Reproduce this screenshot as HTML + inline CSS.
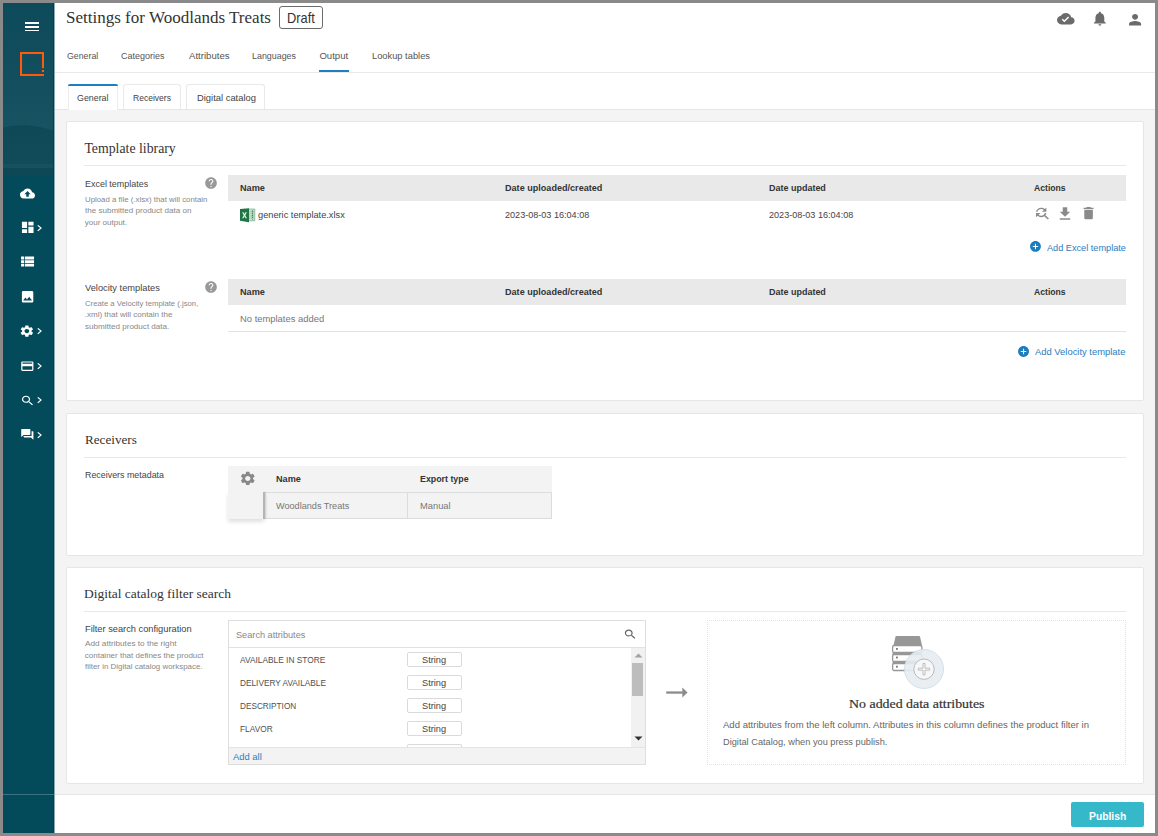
<!DOCTYPE html><html><head><meta charset="utf-8"><title>Settings</title><style>*{margin:0;padding:0}
html,body{width:1158px;height:836px;overflow:hidden;background:#8a8a8a}
body{position:relative;font-family:"Liberation Sans", sans-serif;color:#444}
.t{position:absolute;white-space:nowrap;line-height:1;transform-origin:0 0}
.b{position:absolute}
</style></head><body>
<div class="b" style="left:3px;top:3px;width:1152px;height:830px;background:#fff"></div>
<div class="b" style="left:54px;top:110px;width:1101px;height:684px;background:#f4f4f4"></div>
<div class="b" style="left:54px;top:109px;width:1101px;height:1px;background:#e6e6e6"></div>
<div class="b" style="left:54px;top:72px;width:1101px;height:1px;background:#e8e8e8"></div>
<div class="b" style="left:54px;top:794px;width:1101px;height:1px;background:#e6e6e6"></div>
<div class="b" style="left:3px;top:3px;width:51px;height:830px;background:#034b5b"></div>
<svg class="b" style="left:3px;top:3px" width="51" height="172" viewBox="0 0 51 172">
<defs><linearGradient id="sky" x1="0" y1="0" x2="0" y2="1"><stop offset="0" stop-color="#0e4b5a"/><stop offset="0.5" stop-color="#134f5e"/><stop offset="1" stop-color="#1b5765"/></linearGradient>
<linearGradient id="mt" x1="0" y1="0" x2="0" y2="1"><stop offset="0" stop-color="#0f4856"/><stop offset="1" stop-color="#124b59"/></linearGradient></defs>
<rect width="51" height="172" fill="url(#sky)"/>
<path d="M0 124.5 C8 123 16 121.8 22 122 C32 122.5 42 125 51 127.5 L51 172 L0 172 Z" fill="url(#mt)"/>
<rect y="161" width="51" height="4" fill="#15515f"/>
<rect y="165" width="51" height="7" fill="#0e4755"/>
</svg>
<div class="b" style="left:53px;top:3px;width:1px;height:830px;background:#003f4f"></div>
<div class="b" style="left:54px;top:3px;width:1px;height:830px;background:#8aa9b1"></div>
<div class="b" style="left:3px;top:794px;width:51px;height:1px;background:#3d7380"></div>
<div class="t" style="left:66.40px;top:8.89px;font-size:17px;font-family:'Liberation Serif', serif;color:#333;transform:scaleX(1.0015);">Settings for Woodlands Treats</div>
<div class="b" style="left:279px;top:6px;width:44px;height:23px;border:1px solid #6b6b6b;border-radius:3px;background:#fff;box-sizing:border-box"></div>
<div class="t" style="left:287.30px;top:10.89px;font-size:14.6px;color:#333;transform:scaleX(0.8787);">Draft</div>
<div class="t" style="left:66.90px;top:50.94px;font-size:9.6px;color:#555;transform:scaleX(0.9165);">General</div>
<div class="t" style="left:121.40px;top:50.94px;font-size:9.6px;color:#555;transform:scaleX(0.9370);">Categories</div>
<div class="t" style="left:189.00px;top:50.94px;font-size:9.6px;color:#555;">Attributes</div>
<div class="t" style="left:252.00px;top:50.94px;font-size:9.6px;color:#555;transform:scaleX(0.9261);">Languages</div>
<div class="t" style="left:319.40px;top:50.94px;font-size:9.6px;color:#555;">Output</div>
<div class="t" style="left:372.00px;top:50.94px;font-size:9.6px;color:#555;transform:scaleX(0.9702);">Lookup tables</div>
<div class="b" style="left:319px;top:70px;width:30px;height:2px;background:#1b7fc4"></div>
<div class="b" style="left:68px;top:84px;width:50px;height:26px;background:#fff;border:1px solid #ececec;border-bottom:none;border-radius:2px 2px 0 0;box-sizing:border-box"></div>
<div class="b" style="left:68px;top:84px;width:50px;height:2px;background:#1b7fc4;border-radius:2px 2px 0 0"></div>
<div class="b" style="left:123px;top:84px;width:58px;height:25px;background:#fff;border:1px solid #e9e9e9;border-bottom:none;border-radius:3px 3px 0 0;box-sizing:border-box"></div>
<div class="b" style="left:186px;top:84px;width:79px;height:25px;background:#fff;border:1px solid #e9e9e9;border-bottom:none;border-radius:3px 3px 0 0;box-sizing:border-box"></div>
<div class="t" style="left:77.20px;top:92.87px;font-size:9.8px;transform:scaleX(0.9035);">General</div>
<div class="t" style="left:133.20px;top:92.87px;font-size:9.8px;transform:scaleX(0.8722);">Receivers</div>
<div class="t" style="left:196.50px;top:92.87px;font-size:9.8px;transform:scaleX(0.9585);">Digital catalog</div>
<div class="b" style="left:66px;top:121px;width:1078px;height:280px;background:#fff;border:1px solid #e6e6e6;border-radius:2px;box-sizing:border-box"></div>
<div class="b" style="left:66px;top:413px;width:1078px;height:143px;background:#fff;border:1px solid #e6e6e6;border-radius:2px;box-sizing:border-box"></div>
<div class="b" style="left:66px;top:567px;width:1078px;height:217px;background:#fff;border:1px solid #e6e6e6;border-radius:2px;box-sizing:border-box"></div>
<div class="t" style="left:84.40px;top:141.55px;font-size:13.8px;font-family:'Liberation Serif', serif;color:#333;">Template library</div>
<div class="b" style="left:84px;top:165px;width:1042px;height:1px;background:#e8e8e8"></div>
<div class="t" style="left:84.80px;top:178.97px;font-size:9.8px;transform:scaleX(0.9136);">Excel templates</div>
<div class="t" style="left:84.80px;top:195.60px;font-size:8.0px;color:#888;transform:scaleX(0.9797);">Upload a file (.xlsx) that will contain</div>
<div class="t" style="left:84.80px;top:207.10px;font-size:8.0px;color:#888;transform:scaleX(1.0052);">the submitted product data on</div>
<div class="t" style="left:84.80px;top:218.60px;font-size:8.0px;color:#888;">your output.</div>
<div class="b" style="left:228px;top:175px;width:898px;height:26px;background:#e9e9e9"></div>
<div class="t" style="left:240.00px;top:182.89px;font-size:9.9px;font-weight:700;color:#333;transform:scaleX(0.9272);">Name</div>
<div class="t" style="left:504.70px;top:182.89px;font-size:9.9px;font-weight:700;color:#333;transform:scaleX(0.9192);">Date uploaded/created</div>
<div class="t" style="left:769.40px;top:182.89px;font-size:9.9px;font-weight:700;color:#333;transform:scaleX(0.9090);">Date updated</div>
<div class="t" style="left:1033.60px;top:182.89px;font-size:9.9px;font-weight:700;color:#333;transform:scaleX(0.8732);">Actions</div>
<div class="t" style="left:257.60px;top:210.24px;font-size:9.6px;transform:scaleX(0.9626);">generic template.xlsx</div>
<div class="t" style="left:504.70px;top:210.24px;font-size:9.6px;transform:scaleX(0.9457);">2023-08-03 16:04:08</div>
<div class="t" style="left:769.40px;top:210.24px;font-size:9.6px;transform:scaleX(0.9457);">2023-08-03 16:04:08</div>
<div class="t" style="left:1046.90px;top:242.84px;font-size:9.6px;color:#2a7dc0;transform:scaleX(0.9551);">Add Excel template</div>
<div class="t" style="left:84.80px;top:283.37px;font-size:9.8px;transform:scaleX(0.9470);">Velocity templates</div>
<div class="t" style="left:84.80px;top:299.70px;font-size:8.0px;color:#888;transform:scaleX(0.9651);">Create a Velocity template (.json,</div>
<div class="t" style="left:84.80px;top:311.20px;font-size:8.0px;color:#888;">.xml) that will contain the</div>
<div class="t" style="left:84.80px;top:322.70px;font-size:8.0px;color:#888;transform:scaleX(1.0083);">submitted product data.</div>
<div class="b" style="left:228px;top:279px;width:898px;height:26px;background:#e9e9e9"></div>
<div class="t" style="left:240.00px;top:287.08px;font-size:9.9px;font-weight:700;color:#333;transform:scaleX(0.9272);">Name</div>
<div class="t" style="left:504.70px;top:287.08px;font-size:9.9px;font-weight:700;color:#333;transform:scaleX(0.9192);">Date uploaded/created</div>
<div class="t" style="left:769.40px;top:287.08px;font-size:9.9px;font-weight:700;color:#333;transform:scaleX(0.9090);">Date updated</div>
<div class="t" style="left:1033.60px;top:287.08px;font-size:9.9px;font-weight:700;color:#333;transform:scaleX(0.8732);">Actions</div>
<div class="t" style="left:240.00px;top:313.84px;font-size:9.6px;color:#777;transform:scaleX(0.9800);">No templates added</div>
<div class="b" style="left:228px;top:331px;width:898px;height:1px;background:#e2e2e2"></div>
<div class="t" style="left:1034.90px;top:347.34px;font-size:9.6px;color:#2a7dc0;transform:scaleX(0.9803);">Add Velocity template</div>
<div class="t" style="left:84.80px;top:432.81px;font-size:13px;font-family:'Liberation Serif', serif;color:#333;transform:scaleX(1.0107);">Receivers</div>
<div class="b" style="left:84px;top:457px;width:1042px;height:1px;background:#e8e8e8"></div>
<div class="t" style="left:84.80px;top:469.87px;font-size:9.8px;transform:scaleX(0.9065);">Receivers metadata</div>
<div class="b" style="left:228px;top:466px;width:324px;height:53px;background:#f3f3f3"></div>
<div class="b" style="left:228px;top:492px;width:324px;height:27px;border:1px solid #dcdcdc;border-left:none;box-sizing:border-box"></div>
<div class="b" style="left:407px;top:492px;width:1px;height:27px;background:#dcdcdc"></div>
<div class="b" style="left:228px;top:492px;width:36px;height:27px;background:#f3f3f3;box-shadow:0 3px 4px rgba(0,0,0,0.12)"></div>
<div class="b" style="left:263px;top:492px;width:2px;height:27px;background:#b5b5b5;box-shadow:1px 0 2px rgba(0,0,0,0.15)"></div>
<div class="t" style="left:276.00px;top:474.48px;font-size:9.9px;font-weight:700;color:#333;transform:scaleX(0.9235);">Name</div>
<div class="t" style="left:419.80px;top:474.48px;font-size:9.9px;font-weight:700;color:#333;transform:scaleX(0.8942);">Export type</div>
<div class="t" style="left:276.00px;top:500.84px;font-size:9.6px;color:#777;transform:scaleX(0.9508);">Woodlands Treats</div>
<div class="t" style="left:419.80px;top:500.84px;font-size:9.6px;color:#777;transform:scaleX(0.9719);">Manual</div>
<div class="t" style="left:84.40px;top:587.09px;font-size:13.5px;font-family:'Liberation Serif', serif;color:#333;transform:scaleX(0.9979);">Digital catalog filter search</div>
<div class="b" style="left:84px;top:611px;width:1042px;height:1px;background:#e8e8e8"></div>
<div class="t" style="left:84.80px;top:623.97px;font-size:9.8px;transform:scaleX(0.9454);">Filter search configuration</div>
<div class="t" style="left:84.80px;top:640.20px;font-size:8.0px;color:#888;transform:scaleX(1.0236);">Add attributes to the right</div>
<div class="t" style="left:84.80px;top:651.50px;font-size:8.0px;color:#888;">container that defines the product</div>
<div class="t" style="left:84.80px;top:663.30px;font-size:8.0px;color:#888;transform:scaleX(0.9897);">filter in Digital catalog workspace.</div>
<div class="b" style="left:228px;top:620px;width:418px;height:145px;border:1px solid #dedede;box-sizing:border-box;background:#fff"></div>
<div class="b" style="left:229px;top:647px;width:416px;height:1px;background:#e2e2e2"></div>
<div class="t" style="left:236.30px;top:629.84px;font-size:9.6px;color:#888;transform:scaleX(0.9563);">Search attributes</div>
<div class="t" style="left:240.40px;top:655.04px;font-size:9.6px;color:#505050;transform:scaleX(0.8699);">AVAILABLE IN STORE</div>
<div class="b" style="left:407px;top:652px;width:55px;height:15px;border:1px solid #dadada;border-radius:2px;box-sizing:border-box;background:#fff"></div>
<div class="t" style="left:422.10px;top:655.34px;font-size:9.6px;transform:scaleX(0.9610);">String</div>
<div class="t" style="left:240.40px;top:677.94px;font-size:9.6px;color:#505050;transform:scaleX(0.8633);">DELIVERY AVAILABLE</div>
<div class="b" style="left:407px;top:675px;width:55px;height:15px;border:1px solid #dadada;border-radius:2px;box-sizing:border-box;background:#fff"></div>
<div class="t" style="left:422.10px;top:678.24px;font-size:9.6px;transform:scaleX(0.9610);">String</div>
<div class="t" style="left:240.40px;top:700.84px;font-size:9.6px;color:#505050;transform:scaleX(0.8581);">DESCRIPTION</div>
<div class="b" style="left:407px;top:698px;width:55px;height:15px;border:1px solid #dadada;border-radius:2px;box-sizing:border-box;background:#fff"></div>
<div class="t" style="left:422.10px;top:701.14px;font-size:9.6px;transform:scaleX(0.9610);">String</div>
<div class="t" style="left:240.40px;top:723.74px;font-size:9.6px;color:#505050;transform:scaleX(0.8674);">FLAVOR</div>
<div class="b" style="left:407px;top:721px;width:55px;height:15px;border:1px solid #dadada;border-radius:2px;box-sizing:border-box;background:#fff"></div>
<div class="t" style="left:422.10px;top:724.04px;font-size:9.6px;transform:scaleX(0.9610);">String</div>
<div class="b" style="left:407px;top:744px;width:55px;height:4px;border:1px solid #dadada;border-bottom:none;border-radius:2px 2px 0 0;box-sizing:border-box"></div>
<div class="b" style="left:631px;top:648px;width:14px;height:99px;background:#f1f1f1"></div>
<div class="b" style="left:632px;top:663px;width:11px;height:33px;background:#bdbdbd"></div>
<div class="b" style="left:229px;top:747px;width:416px;height:17px;background:#f3f3f3;border-top:1px solid #e4e4e4;box-sizing:border-box"></div>
<div class="t" style="left:232.70px;top:751.84px;font-size:9.6px;color:#2a7dc0;transform:scaleX(0.9811);">Add all</div>
<svg class="b" style="left:660px;top:682px" width="34" height="20" viewBox="0 0 34 20"><rect x="6.2" y="9.4" width="16.6" height="2.3" fill="#8c8c8c"/><path d="M22.3 5.6L27.6 10.6L22.3 15.6Z" fill="#8c8c8c"/></svg>
<div class="b" style="left:707px;top:620px;width:419px;height:145px;border:1px dotted #e2e2e2;box-sizing:border-box"></div>
<div class="t" style="left:848.90px;top:698.46px;font-size:12.7px;font-family:'Liberation Serif', serif;color:#333;transform:scaleX(1.0955);-webkit-text-stroke:0.2px #333;">No added data attributes</div>
<div class="t" style="left:722.50px;top:720.31px;font-size:9.4px;color:#666;transform:scaleX(1.0180);">Add attributes from the left column. Attributes in this column defines the product filter in</div>
<div class="t" style="left:722.50px;top:737.41px;font-size:9.4px;color:#666;transform:scaleX(0.9856);">Digital Catalog, when you press publish.</div>
<div class="b" style="left:24.8px;top:22px;width:14.2px;height:1.9px;background:#fff"></div><div class="b" style="left:24.8px;top:25.8px;width:14.2px;height:1.9px;background:#fff"></div><div class="b" style="left:24.8px;top:29.5px;width:14.2px;height:1.9px;background:#fff"></div>
<svg class="b" style="left:20px;top:52px" width="24" height="24" viewBox="0 0 24 24"><path d="M23 16.3V1H1V23H24" fill="none" stroke="#ff5a0a" stroke-width="2.1"/><rect x="21.9" y="18" width="2.1" height="2.1" fill="#ff5a0a"/></svg>
<svg class="b" style="left:20.00px;top:185.50px" width="15.00" height="15.00" viewBox="0 0 24 24" preserveAspectRatio="none"><path fill="#fff" d="M19.35 10.04C18.67 6.59 15.64 4 12 4 9.11 4 6.6 5.64 5.35 8.04 2.34 8.36 0 10.91 0 14c0 3.31 2.69 6 6 6h13c2.76 0 5-2.24 5-5 0-2.64-2.05-4.78-4.65-4.96zM14 13v4h-4v-4H7l5-5 5 5h-3z"/></svg>
<svg class="b" style="left:19.77px;top:219.85px" width="15.47" height="14.80" viewBox="0 0 24 24" preserveAspectRatio="none"><path fill="#fff" d="M3 13h8V3H3v10zm0 8h8v-6H3v6zm10 0h8V11h-8v10zm0-18v6h8V3h-8z"/></svg>
<svg class="b" style="left:32.47px;top:221.85px" width="14.90" height="12.20" viewBox="0 0 24 24" preserveAspectRatio="none"><path fill="#fff" d="M10 6L8.59 7.41 13.17 12l-4.58 4.59L10 18l6-6z"/></svg>
<svg class="b" style="left:17.94px;top:253.43px" width="18.35" height="17.14" viewBox="0 0 24 24" preserveAspectRatio="none"><path fill="#fff" d="M4 14h4v-4H4v4zm0 5h4v-4H4v4zM4 9h4V5H4v4zm5 5h12v-4H9v4zm0 5h12v-4H9v4zM9 5v4h12V5H9z"/></svg>
<svg class="b" style="left:20.00px;top:288.78px" width="15.20" height="15.33" viewBox="0 0 24 24" preserveAspectRatio="none"><path fill="#fff" d="M21 19V5c0-1.1-.9-2-2-2H5c-1.1 0-2 .9-2 2v14c0 1.1.9 2 2 2h14c1.1 0 2-.9 2-2zM8.5 13.5l2.5 3.01L14.5 12l4.5 6H5l3.5-4.5z"/></svg>
<svg class="b" style="left:19.33px;top:324.02px" width="15.74" height="14.16" viewBox="0 0 24 24" preserveAspectRatio="none"><path fill="#fff" d="M19.14 12.94c.04-.3.06-.61.06-.94 0-.32-.02-.64-.07-.94l2.03-1.58c.18-.14.23-.41.12-.61l-1.92-3.32c-.12-.22-.37-.29-.59-.22l-2.39.96c-.5-.38-1.03-.7-1.62-.94l-.36-2.54c-.04-.24-.24-.41-.48-.41h-3.84c-.24 0-.43.17-.47.41l-.36 2.54c-.59.24-1.13.57-1.62.94l-2.39-.96c-.22-.08-.47 0-.59.22L2.74 8.87c-.12.21-.08.47.12.61l2.03 1.58c-.05.3-.09.63-.09.94s.02.64.07.94l-2.03 1.58c-.18.14-.23.41-.12.61l1.920 3.32c.12.22.37.29.59.22l2.39-.96c.5.38 1.03.7 1.62.94l.36 2.54c.05.24.24.41.48.41h3.84c.24 0 .44-.17.47-.41l.36-2.54c.59-.24 1.13-.56 1.62-.94l2.39.96c.22.08.47 0 .59-.22l1.92-3.32c.12-.22.07-.47-.12-.61l-2.01-1.58zM12 15.6c-1.98 0-3.6-1.62-3.6-3.6s1.62-3.6 3.6-3.6 3.6 1.62 3.6 3.6-1.62 3.6-3.6 3.6z"/></svg>
<svg class="b" style="left:32.47px;top:325.25px" width="14.90" height="12.20" viewBox="0 0 24 24" preserveAspectRatio="none"><path fill="#fff" d="M10 6L8.59 7.41 13.17 12l-4.58 4.59L10 18l6-6z"/></svg>
<svg class="b" style="left:19.88px;top:358.62px" width="14.64" height="14.25" viewBox="0 0 24 24" preserveAspectRatio="none"><path fill="#fff" d="M20 4H4c-1.11 0-1.99.89-1.99 2L2 18c0 1.11.89 2 2 2h16c1.11 0 2-.89 2-2V6c0-1.11-.89-2-2-2zm0 14H4v-6h16v6zm0-10H4V6h16v2z"/></svg>
<svg class="b" style="left:32.47px;top:359.75px" width="14.90" height="12.20" viewBox="0 0 24 24" preserveAspectRatio="none"><path fill="#fff" d="M10 6L8.59 7.41 13.17 12l-4.58 4.59L10 18l6-6z"/></svg>
<svg class="b" style="left:20.00px;top:393.95px" width="15.23" height="13.17" viewBox="0 0 24 24" preserveAspectRatio="none"><path fill="#fff" d="M15.5 14h-.79l-.28-.27C15.41 12.590 16 11.11 16 9.5 16 5.91 13.09 3 9.5 3S3 5.91 3 9.5 5.91 16 9.5 16c1.61 0 3.09-.59 4.23-1.57l.27.28v.79l5 4.99L20.49 19l-4.99-5zm-6 0C7.01 14 5 11.99 5 9.5S7.01 5 9.5 5 14 7.01 14 9.5 11.99 14 9.5 14z"/></svg>
<svg class="b" style="left:32.47px;top:394.25px" width="14.90" height="12.20" viewBox="0 0 24 24" preserveAspectRatio="none"><path fill="#fff" d="M10 6L8.59 7.41 13.17 12l-4.58 4.59L10 18l6-6z"/></svg>
<svg class="b" style="left:19.88px;top:427.94px" width="14.64" height="12.72" viewBox="0 0 24 24" preserveAspectRatio="none"><path fill="#fff" d="M21 6h-2v9H6v2c0 .55.45 1 1 1h11l4 4V7c0-.55-.45-1-1-1zm-4 6V3c0-.55-.45-1-1-1H3c-.55 0-1 .45-1 1v14l4-4h10c.55 0 1-.45 1-1z"/></svg>
<svg class="b" style="left:32.47px;top:428.65px" width="14.90" height="12.20" viewBox="0 0 24 24" preserveAspectRatio="none"><path fill="#fff" d="M10 6L8.59 7.41 13.17 12l-4.58 4.59L10 18l6-6z"/></svg>
<svg class="b" style="left:1057.00px;top:9.72px" width="17.60" height="17.25" viewBox="0 0 24 24" preserveAspectRatio="none"><path fill="#6b6b6b" d="M19.35 10.04C18.67 6.590 15.64 4 12 4 9.11 4 6.6 5.64 5.35 8.04 2.34 8.36 0 10.91 0 14c0 3.31 2.69 6 6 6h13c2.76 0 5-2.24 5-5 0-2.64-2.05-4.78-4.65-4.96zM10 17l-3.5-3.5 1.41-1.41L10 14.17 15.18 9l1.41 1.41L10 17z"/></svg>
<svg class="b" style="left:1091.45px;top:10.07px" width="17.70" height="17.16" viewBox="0 0 24 24" preserveAspectRatio="none"><path fill="#6b6b6b" d="M12 22c1.1 0 2-.9 2-2h-4c0 1.1.89 2 2 2zm6-6v-5c0-3.07-1.64-5.64-4.5-6.32V4c0-.83-.67-1.5-1.5-1.5s-1.5.67-1.5 1.5v.68C7.63 5.36 6 7.92 6 11v5l-2 2v1h16v-1l-2-2z"/></svg>
<svg class="b" style="left:1125.77px;top:10.72px" width="18.15" height="17.25" viewBox="0 0 24 24" preserveAspectRatio="none"><path fill="#6b6b6b" d="M12 12c2.21 0 4-1.79 4-4s-1.79-4-4-4-4 1.79-4 4 1.79 4 4 4zm0 2c-2.67 0-8 1.34-8 4v2h16v-2c0-2.66-5.33-4-8-4z"/></svg>
<svg class="b" style="left:204.03px;top:175.63px" width="14.04" height="14.04" viewBox="0 0 24 24" preserveAspectRatio="none"><path fill="#999" d="M12 2C6.48 2 2 6.48 2 12s4.48 10 10 10 10-4.48 10-10S17.52 2 12 2zm1 17h-2v-2h2v2zm2.07-7.75l-.9.92C13.45 12.9 13 13.5 13 15h-2v-.5c0-1.1.45-2.1 1.17-2.83l1.24-1.26c.37-.36.59-.86.59-1.41 0-1.1-.9-2-2-2s-2 .9-2 2H8c0-2.21 1.79-4 4-4s4 1.79 4 4c0 .88-.36 1.68-.93 2.25z"/></svg>
<svg class="b" style="left:204.03px;top:280.33px" width="14.04" height="14.04" viewBox="0 0 24 24" preserveAspectRatio="none"><path fill="#999" d="M12 2C6.48 2 2 6.48 2 12s4.48 10 10 10 10-4.48 10-10S17.52 2 12 2zm1 17h-2v-2h2v2zm2.07-7.75l-.9.92C13.45 12.9 13 13.5 13 15h-2v-.5c0-1.1.45-2.1 1.17-2.83l1.24-1.26c.37-.36.59-.86.59-1.41 0-1.1-.9-2-2-2s-2 .9-2 2H8c0-2.21 1.79-4 4-4s4 1.79 4 4c0 .88-.36 1.68-.93 2.25z"/></svg>
<svg class="b" style="left:1033.03px;top:205.30px" width="17.84" height="16.19" viewBox="0 0 24 24" preserveAspectRatio="none"><path fill="#8a8a8a" d="M11 6c1.38 0 2.63.56 3.54 1.46L12 10h6V4l-2.05 2.05C14.68 4.78 12.93 4 11 4c-3.53 0-6.43 2.61-6.92 6H6.1c.46-2.28 2.48-4 4.9-4zm5.64 9.14c.66-.9 1.12-1.97 1.28-3.14H15.9c-.46 2.28-2.48 4-4.9 4-1.38 0-2.63-.56-3.54-1.46L10 12H4v6l2.05-2.05C7.32 17.22 9.07 18 11 18c1.55 0 2.98-.51 4.14-1.36L20 21.49 21.49 20l-4.85-4.86z"/></svg>
<svg class="b" style="left:1056.25px;top:204.78px" width="18.00" height="17.79" viewBox="0 0 24 24" preserveAspectRatio="none"><path fill="#8a8a8a" d="M19 9h-4V3H9v6H5l7 7 7-7zM5 18v2h14v-2H5z"/></svg>
<svg class="b" style="left:1079.83px;top:205.45px" width="17.14" height="16.40" viewBox="0 0 24 24" preserveAspectRatio="none"><path fill="#8a8a8a" d="M6 19c0 1.1.9 2 2 2h8c1.1 0 2-.9 2-2V7H6v12zM19 4h-3.5l-1-1h-5l-1 1H5v2h14V4z"/></svg>
<svg class="b" style="left:1028.92px;top:239.92px" width="12.96" height="12.96" viewBox="0 0 24 24" preserveAspectRatio="none"><path fill="#1a7cc1" d="M12 2C6.48 2 2 6.48 2 12s4.48 10 10 10 10-4.48 10-10S17.52 2 12 2zm5 11h-4v4h-2v-4H7v-2h4V7h2v4h4v2z"/></svg>
<svg class="b" style="left:1017.31px;top:344.71px" width="13.08" height="13.08" viewBox="0 0 24 24" preserveAspectRatio="none"><path fill="#1a7cc1" d="M12 2C6.48 2 2 6.48 2 12s4.48 10 10 10 10-4.48 10-10S17.52 2 12 2zm5 11h-4v4h-2v-4H7v-2h4V7h2v4h4v2z"/></svg>
<svg class="b" style="left:238.53px;top:469.90px" width="17.55" height="16.80" viewBox="0 0 24 24" preserveAspectRatio="none"><path fill="#888" d="M19.14 12.94c.04-.3.06-.61.06-.94 0-.32-.02-.64-.07-.94l2.03-1.58c.18-.14.23-.41.12-.61l-1.92-3.32c-.12-.22-.37-.29-.59-.22l-2.39.96c-.5-.38-1.03-.7-1.62-.94l-.36-2.54c-.04-.24-.24-.41-.48-.41h-3.84c-.24 0-.43.17-.47.41l-.36 2.54c-.59.24-1.13.57-1.62.94l-2.39-.96c-.22-.08-.47 0-.59.22L2.74 8.87c-.12.21-.08.47.12.61l2.03 1.58c-.05.3-.09.63-.09.94s.02.64.07.94l-2.03 1.58c-.18.14-.23.41-.12.61l1.920 3.32c.12.22.37.29.59.22l2.39-.96c.5.38 1.03.7 1.62.94l.36 2.54c.05.24.24.41.48.41h3.84c.24 0 .44-.17.47-.41l.36-2.54c.59-.24 1.13-.56 1.62-.94l2.39.96c.22.08.47 0 .59-.22l1.92-3.32c.12-.22.07-.47-.12-.61l-2.01-1.58zM12 15.6c-1.98 0-3.6-1.62-3.6-3.6s1.62-3.6 3.6-3.6 3.6 1.62 3.6 3.6-1.62 3.6-3.6 3.6z"/></svg>
<svg class="b" style="left:623.28px;top:627.62px" width="14.55" height="12.62" viewBox="0 0 24 24" preserveAspectRatio="none"><path fill="#666" d="M15.5 14h-.79l-.28-.27C15.41 12.590 16 11.11 16 9.5 16 5.91 13.09 3 9.5 3S3 5.91 3 9.5 5.91 16 9.5 16c1.61 0 3.09-.59 4.23-1.57l.27.28v.79l5 4.99L20.49 19l-4.99-5zm-6 0C7.01 14 5 11.99 5 9.5S7.01 5 9.5 5 14 7.01 14 9.5 11.99 14 9.5 14z"/></svg>
<svg class="b" style="left:634px;top:652px" width="9" height="6"><path d="M0.5 5.5L4.5 1.5L8.5 5.5Z" fill="#a3a3a3"/></svg>
<svg class="b" style="left:634px;top:736px" width="9" height="6"><path d="M0.5 0.5L4.5 4.5L8.5 0.5Z" fill="#333"/></svg>
<svg class="b" style="left:239px;top:207px" width="17" height="16" viewBox="0 0 17 16">
<path d="M9.5 2H15.8V13.8H9.5Z" fill="#cfe3d5" stroke="#5d9f74" stroke-width="0.6"/>
<path d="M10 4.3H15.2M10 6.1H15.2M10 7.9H15.2M10 9.7H15.2M10 11.5H15.2" stroke="#9cc5aa" stroke-width="0.7"/>
<path d="M13.5 3.5V12.5" stroke="#2d8050" stroke-width="1.2" stroke-dasharray="1.2 0.9"/>
<path d="M1 2L10 1.2V15.2L1 13.8Z" fill="#1f7544"/>
<path d="M3.1 5.2L4.5 5.2L5.5 7.1L6.5 5.2L7.9 5.2L6.3 8.2L7.9 11.2L6.5 11.2L5.5 9.3L4.5 11.2L3.1 11.2L4.7 8.2Z" fill="#e8f1ea"/>
</svg>
<svg class="b" style="left:888px;top:632px" width="60" height="60" viewBox="0 0 60 60">
<path d="M7.5 4.5Q7.7 3.9 8.5 3.9H31Q31.8 3.9 32 4.5L34 13.5H5.5Z" fill="#979797"/>
<rect x="4.6" y="13.5" width="29.3" height="7" rx="1.6" fill="#fff" stroke="#979797" stroke-width="1.3"/>
<rect x="4.6" y="20.5" width="29.3" height="2.5" fill="#979797"/>
<rect x="4.6" y="22.5" width="29.3" height="7" rx="1.6" fill="#fff" stroke="#979797" stroke-width="1.3"/>
<rect x="4.6" y="29.5" width="29.3" height="2.5" fill="#979797"/>
<rect x="4.6" y="31.5" width="29.3" height="7" rx="1.6" fill="#fff" stroke="#979797" stroke-width="1.3"/>
<rect x="8" y="16" width="1.8" height="1.8" fill="#777"/>
<rect x="8" y="24.6" width="1.8" height="1.8" fill="#777"/>
<rect x="8" y="33.8" width="1.8" height="1.8" fill="#777"/>
<circle cx="36" cy="37" r="19.5" fill="#e7ecf2" fill-opacity="0.9" stroke="#cadbe8" stroke-width="0.8"/>
<circle cx="36" cy="37.2" r="10.2" fill="#f6f7f9" stroke="#b9bcc0" stroke-width="1"/>
<path d="M35 31.5H37V36.2H41.7V38.2H37V42.9H35V38.2H30.3V36.2H35Z" fill="#f6f7f9" stroke="#b3b3b3" stroke-width="0.8"/>
</svg>
<div class="b" style="left:1071px;top:802px;width:73px;height:25px;background:#34b8ca;border-radius:2px"></div>
<div class="t" style="left:1088.70px;top:811.13px;font-size:10.9px;font-weight:700;color:#fff;transform:scaleX(0.9476);">Publish</div>
</body></html>
